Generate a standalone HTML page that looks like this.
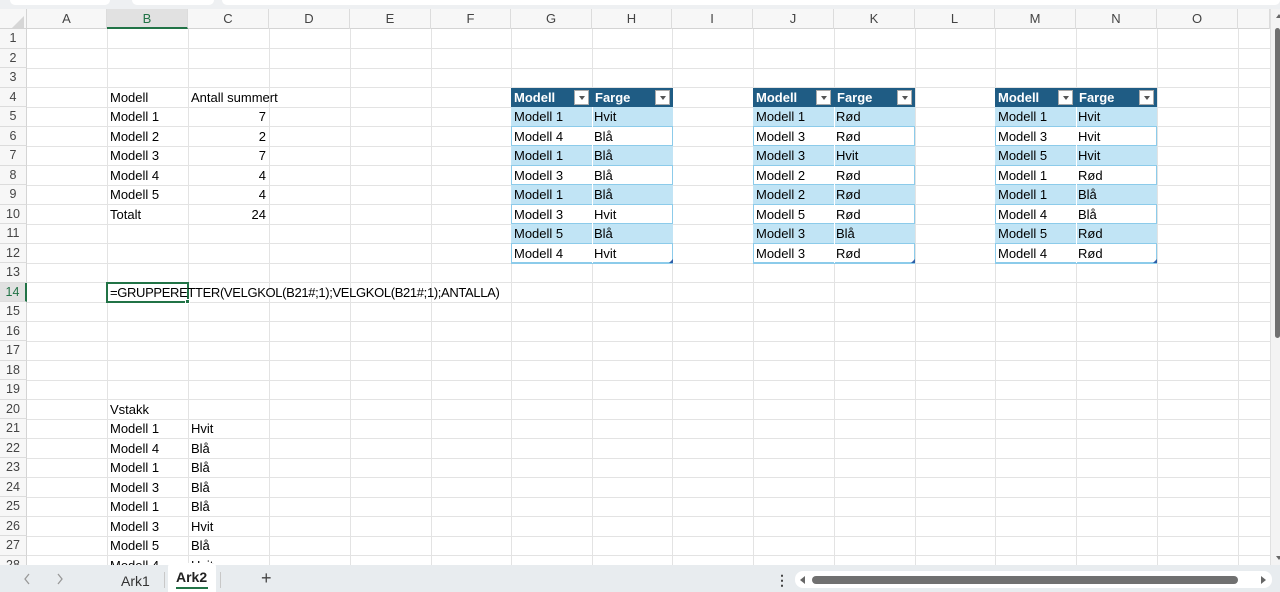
<!DOCTYPE html>
<html><head><meta charset="utf-8"><style>
*{margin:0;padding:0;box-sizing:border-box}
body{width:1280px;height:592px;overflow:hidden;background:#fff;font-family:"Liberation Sans",Arial,sans-serif;font-size:13px;color:#000;position:relative}
.a{position:absolute}
.top{left:0;top:0;width:1280px;height:9px;background:#eef0f2}
.hdr{top:9px;height:20px;background:#f7f7f7;border-bottom:1px solid #d4d4d4}
.ch{position:absolute;top:9px;height:20px;line-height:20px;text-align:center;color:#444;font-size:13px;border-right:1px solid #dcdcdc}
.rh{position:absolute;left:0;width:27px;height:19.5px;line-height:19.5px;text-align:center;color:#444;font-size:12.5px;background:#f7f7f7;border-bottom:1px solid #dcdcdc;border-right:1px solid #d4d4d4}
.vl{position:absolute;top:29px;width:1px;height:536px;background:#e3e3e3}
.hl{position:absolute;left:27px;width:1243px;height:1px;background:#e3e3e3}
.c{position:absolute;height:19.5px;line-height:19.5px;white-space:nowrap}
.r{text-align:right}
.th{position:absolute;background:#1f5c84;color:#fff;font-weight:bold;height:19.5px;line-height:19.5px;padding-left:3px}
.dd{position:absolute;top:2px;right:3px;width:15px;height:15px;background:#fff;border:1px solid #aaa}
.dd:after{content:"";position:absolute;left:4px;top:5px;border-left:3px solid transparent;border-right:3px solid transparent;border-top:4px solid #555}
.td{position:absolute;height:19.5px;line-height:19.5px;padding-left:3px;border-bottom:1px solid #8ccbea}
.b{background:#c1e4f5}
</style></head><body>
<div class="a top"></div>
<div class="a" style="left:10px;top:0;width:100px;height:5px;background:#fff;border-radius:0 0 5px 5px"></div>
<div class="a" style="left:132px;top:0;width:82px;height:5px;background:#fff;border-radius:0 0 5px 5px"></div>
<div class="a" style="left:222px;top:0;width:1058px;height:5px;background:#fff;border-radius:0 0 5px 5px"></div>
<div class="a hdr" style="left:0;width:1270px"></div>
<div class="a" style="left:0;top:9px;width:27px;height:20px;background:#f7f7f7;border-right:1px solid #d4d4d4;border-bottom:1px solid #d4d4d4"></div>
<div class="a" style="left:12px;top:16px;border-left:12px solid transparent;border-bottom:12px solid #d6d6d6"></div>

<div class="ch" style="left:27px;width:80px">A</div>
<div class="ch" style="left:107px;width:81px;background:#e1e1e1;color:#217346;border-bottom:2px solid #217346">B</div>
<div class="ch" style="left:188px;width:81px">C</div>
<div class="ch" style="left:269px;width:81px">D</div>
<div class="ch" style="left:350px;width:81px">E</div>
<div class="ch" style="left:431px;width:80px">F</div>
<div class="ch" style="left:511px;width:81px">G</div>
<div class="ch" style="left:592px;width:80px">H</div>
<div class="ch" style="left:672px;width:81px">I</div>
<div class="ch" style="left:753px;width:81px">J</div>
<div class="ch" style="left:834px;width:81px">K</div>
<div class="ch" style="left:915px;width:80px">L</div>
<div class="ch" style="left:995px;width:81px">M</div>
<div class="ch" style="left:1076px;width:81px">N</div>
<div class="ch" style="left:1157px;width:81px">O</div>
<div class="ch" style="left:1238px;width:32px"></div>

<div class="vl" style="left:107px"></div><div class="vl" style="left:188px"></div><div class="vl" style="left:269px"></div><div class="vl" style="left:350px"></div><div class="vl" style="left:431px"></div><div class="vl" style="left:511px"></div><div class="vl" style="left:592px"></div><div class="vl" style="left:672px"></div><div class="vl" style="left:753px"></div><div class="vl" style="left:834px"></div><div class="vl" style="left:915px"></div><div class="vl" style="left:995px"></div><div class="vl" style="left:1076px"></div><div class="vl" style="left:1157px"></div><div class="vl" style="left:1238px"></div>
<div class="hl" style="top:48px"></div><div class="hl" style="top:67.5px"></div><div class="hl" style="top:87px"></div><div class="hl" style="top:106.5px"></div><div class="hl" style="top:126px"></div><div class="hl" style="top:145.5px"></div><div class="hl" style="top:165px"></div><div class="hl" style="top:184.5px"></div><div class="hl" style="top:204px"></div><div class="hl" style="top:223.5px"></div><div class="hl" style="top:243px"></div><div class="hl" style="top:262.5px"></div><div class="hl" style="top:282px"></div><div class="hl" style="top:301.5px"></div><div class="hl" style="top:321px"></div><div class="hl" style="top:340.5px"></div><div class="hl" style="top:360px"></div><div class="hl" style="top:379.5px"></div><div class="hl" style="top:399px"></div><div class="hl" style="top:418.5px"></div><div class="hl" style="top:438px"></div><div class="hl" style="top:457.5px"></div><div class="hl" style="top:477px"></div><div class="hl" style="top:496.5px"></div><div class="hl" style="top:516px"></div><div class="hl" style="top:535.5px"></div><div class="hl" style="top:555px"></div>

<div class="rh" style="top:29px">1</div><div class="rh" style="top:48.5px">2</div><div class="rh" style="top:68px">3</div><div class="rh" style="top:87.5px">4</div><div class="rh" style="top:107px">5</div><div class="rh" style="top:126.5px">6</div><div class="rh" style="top:146px">7</div><div class="rh" style="top:165.5px">8</div><div class="rh" style="top:185px">9</div><div class="rh" style="top:204.5px">10</div><div class="rh" style="top:224px">11</div><div class="rh" style="top:243.5px">12</div><div class="rh" style="top:263px">13</div><div class="rh" style="top:282.5px;background:#e1e1e1;color:#217346;border-right:2px solid #217346">14</div><div class="rh" style="top:302px">15</div><div class="rh" style="top:321.5px">16</div><div class="rh" style="top:341px">17</div><div class="rh" style="top:360.5px">18</div><div class="rh" style="top:380px">19</div><div class="rh" style="top:399.5px">20</div><div class="rh" style="top:419px">21</div><div class="rh" style="top:438.5px">22</div><div class="rh" style="top:458px">23</div><div class="rh" style="top:477.5px">24</div><div class="rh" style="top:497px">25</div><div class="rh" style="top:516.5px">26</div><div class="rh" style="top:536px">27</div><div class="rh" style="top:555.5px">28</div>

<div class="c" style="left:110px;top:87.5px">Modell</div><div class="c" style="left:191px;top:87.5px">Antall summert</div>
<div class="c" style="left:110px;top:107px">Modell 1</div><div class="c r" style="left:188px;width:78px;top:107px">7</div>
<div class="c" style="left:110px;top:126.5px">Modell 2</div><div class="c r" style="left:188px;width:78px;top:126.5px">2</div>
<div class="c" style="left:110px;top:146px">Modell 3</div><div class="c r" style="left:188px;width:78px;top:146px">7</div>
<div class="c" style="left:110px;top:165.5px">Modell 4</div><div class="c r" style="left:188px;width:78px;top:165.5px">4</div>
<div class="c" style="left:110px;top:185px">Modell 5</div><div class="c r" style="left:188px;width:78px;top:185px">4</div>
<div class="c" style="left:110px;top:204.5px">Totalt</div><div class="c r" style="left:188px;width:78px;top:204.5px">24</div>

<div class="a" style="left:106px;top:282px;width:83px;height:21px;border:2px solid #217346"></div>
<div class="a" style="left:185px;top:299px;width:5px;height:5px;background:#217346;border:1px solid #fff"></div>
<div class="c" style="left:110px;top:282.5px;letter-spacing:-0.35px">=GRUPPERETTER(VELGKOL(B21#;1);VELGKOL(B21#;1);ANTALLA)</div>

<div class="c" style="left:110px;top:399.5px">Vstakk</div>
<div class="c" style="left:110px;top:419px">Modell 1</div><div class="c" style="left:191px;top:419px">Hvit</div>
<div class="c" style="left:110px;top:438.5px">Modell 4</div><div class="c" style="left:191px;top:438.5px">Blå</div>
<div class="c" style="left:110px;top:458px">Modell 1</div><div class="c" style="left:191px;top:458px">Blå</div>
<div class="c" style="left:110px;top:477.5px">Modell 3</div><div class="c" style="left:191px;top:477.5px">Blå</div>
<div class="c" style="left:110px;top:497px">Modell 1</div><div class="c" style="left:191px;top:497px">Blå</div>
<div class="c" style="left:110px;top:516.5px">Modell 3</div><div class="c" style="left:191px;top:516.5px">Hvit</div>
<div class="c" style="left:110px;top:536px">Modell 5</div><div class="c" style="left:191px;top:536px">Blå</div>
<div class="c" style="left:110px;top:555.5px">Modell 4</div><div class="c" style="left:191px;top:555.5px">Hvit</div>

<div class="a" style="left:511px;top:87.5px;width:162px;height:176px;border:1px solid #8ccbea;background:#fff"></div>
<div class="th" style="left:511px;top:87.5px;width:81px">Modell<span class="dd"></span></div>
<div class="th" style="left:592px;top:87.5px;width:81px">Farge<span class="dd"></span></div>
<div class="td b" style="left:511px;top:107px;width:162px">Modell 1</div><div class="c" style="left:594px;top:107px">Hvit</div>
<div class="td" style="left:511px;top:126.5px;width:162px">Modell 4</div><div class="c" style="left:594px;top:126.5px">Blå</div>
<div class="td b" style="left:511px;top:146px;width:162px">Modell 1</div><div class="c" style="left:594px;top:146px">Blå</div>
<div class="td" style="left:511px;top:165.5px;width:162px">Modell 3</div><div class="c" style="left:594px;top:165.5px">Blå</div>
<div class="td b" style="left:511px;top:185px;width:162px">Modell 1</div><div class="c" style="left:594px;top:185px">Blå</div>
<div class="td" style="left:511px;top:204.5px;width:162px">Modell 3</div><div class="c" style="left:594px;top:204.5px">Hvit</div>
<div class="td b" style="left:511px;top:224px;width:162px">Modell 5</div><div class="c" style="left:594px;top:224px">Blå</div>
<div class="td" style="left:511px;top:243.5px;width:162px">Modell 4</div><div class="c" style="left:594px;top:243.5px">Hvit</div>
<div class="a" style="left:592px;top:107px;width:1px;height:156px;background:#fff"></div>
<div class="a" style="left:669px;top:259px;border-left:4px solid transparent;border-bottom:4px solid #2e5fa8"></div>

<div class="a" style="left:753px;top:87.5px;width:162px;height:176px;border:1px solid #8ccbea;background:#fff"></div>
<div class="th" style="left:753px;top:87.5px;width:81px">Modell<span class="dd"></span></div>
<div class="th" style="left:834px;top:87.5px;width:81px">Farge<span class="dd"></span></div>
<div class="td b" style="left:753px;top:107px;width:162px">Modell 1</div><div class="c" style="left:836px;top:107px">Rød</div>
<div class="td" style="left:753px;top:126.5px;width:162px">Modell 3</div><div class="c" style="left:836px;top:126.5px">Rød</div>
<div class="td b" style="left:753px;top:146px;width:162px">Modell 3</div><div class="c" style="left:836px;top:146px">Hvit</div>
<div class="td" style="left:753px;top:165.5px;width:162px">Modell 2</div><div class="c" style="left:836px;top:165.5px">Rød</div>
<div class="td b" style="left:753px;top:185px;width:162px">Modell 2</div><div class="c" style="left:836px;top:185px">Rød</div>
<div class="td" style="left:753px;top:204.5px;width:162px">Modell 5</div><div class="c" style="left:836px;top:204.5px">Rød</div>
<div class="td b" style="left:753px;top:224px;width:162px">Modell 3</div><div class="c" style="left:836px;top:224px">Blå</div>
<div class="td" style="left:753px;top:243.5px;width:162px">Modell 3</div><div class="c" style="left:836px;top:243.5px">Rød</div>
<div class="a" style="left:834px;top:107px;width:1px;height:156px;background:#fff"></div>
<div class="a" style="left:911px;top:259px;border-left:4px solid transparent;border-bottom:4px solid #2e5fa8"></div>

<div class="a" style="left:995px;top:87.5px;width:162px;height:176px;border:1px solid #8ccbea;background:#fff"></div>
<div class="th" style="left:995px;top:87.5px;width:81px">Modell<span class="dd"></span></div>
<div class="th" style="left:1076px;top:87.5px;width:81px">Farge<span class="dd"></span></div>
<div class="td b" style="left:995px;top:107px;width:162px">Modell 1</div><div class="c" style="left:1078px;top:107px">Hvit</div>
<div class="td" style="left:995px;top:126.5px;width:162px">Modell 3</div><div class="c" style="left:1078px;top:126.5px">Hvit</div>
<div class="td b" style="left:995px;top:146px;width:162px">Modell 5</div><div class="c" style="left:1078px;top:146px">Hvit</div>
<div class="td" style="left:995px;top:165.5px;width:162px">Modell 1</div><div class="c" style="left:1078px;top:165.5px">Rød</div>
<div class="td b" style="left:995px;top:185px;width:162px">Modell 1</div><div class="c" style="left:1078px;top:185px">Blå</div>
<div class="td" style="left:995px;top:204.5px;width:162px">Modell 4</div><div class="c" style="left:1078px;top:204.5px">Blå</div>
<div class="td b" style="left:995px;top:224px;width:162px">Modell 5</div><div class="c" style="left:1078px;top:224px">Rød</div>
<div class="td" style="left:995px;top:243.5px;width:162px">Modell 4</div><div class="c" style="left:1078px;top:243.5px">Rød</div>
<div class="a" style="left:1076px;top:107px;width:1px;height:156px;background:#fff"></div>
<div class="a" style="left:1153px;top:259px;border-left:4px solid transparent;border-bottom:4px solid #2e5fa8"></div>

<div class="a" style="left:1270px;top:9px;width:10px;height:556px;background:#f3f3f3;border-left:1px solid #e0e0e0"></div>
<div class="a" style="left:1276px;top:14px;border-left:3px solid transparent;border-right:3px solid transparent;border-bottom:4px solid #666"></div>
<div class="a" style="left:1275px;top:28px;width:5px;height:310px;background:#707070;border-radius:3px"></div>
<div class="a" style="left:1276px;top:556px;border-left:3px solid transparent;border-right:3px solid transparent;border-top:4px solid #666"></div>

<div class="a" style="left:0;top:565px;width:1280px;height:27px;background:#e8ecef"></div>
<svg class="a" style="left:22px;top:572px" width="10" height="14"><path d="M7 2 L3 7 L7 12" fill="none" stroke="#999" stroke-width="1.3"/></svg>
<svg class="a" style="left:55px;top:572px" width="10" height="14"><path d="M3 2 L7 7 L3 12" fill="none" stroke="#999" stroke-width="1.3"/></svg>
<div class="a" style="left:121px;top:573px;font-size:14px;color:#333">Ark1</div>
<div class="a" style="left:164px;top:572px;width:1px;height:16px;background:#c8c8c8"></div>
<div class="a" style="left:168px;top:563px;width:48px;height:29px;background:#fff;border-radius:4px 4px 0 0"></div>
<div class="a" style="left:176px;top:569px;font-size:14px;font-weight:bold;color:#222">Ark2</div>
<div class="a" style="left:176px;top:587px;width:32px;height:2px;background:#217346"></div>
<div class="a" style="left:220px;top:572px;width:1px;height:16px;background:#c8c8c8"></div>
<div class="a" style="left:261px;top:568px;font-size:18px;color:#444">+</div>
<div class="a" style="left:775px;top:572px;font-size:14px;color:#444;font-weight:bold">&#8942;</div>
<div class="a" style="left:795px;top:571px;width:477px;height:17px;background:#fff;border-radius:8px"></div>
<div class="a" style="left:800px;top:576px;border-top:4px solid transparent;border-bottom:4px solid transparent;border-right:5px solid #666"></div>
<div class="a" style="left:812px;top:576px;width:426px;height:8px;background:#707070;border-radius:4px"></div>
<div class="a" style="left:1261px;top:576px;border-top:4px solid transparent;border-bottom:4px solid transparent;border-left:5px solid #666"></div>
</body></html>
